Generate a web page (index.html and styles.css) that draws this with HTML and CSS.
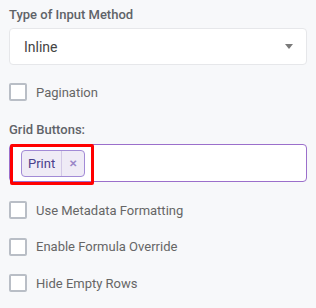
FILE: index.html
```html
<!DOCTYPE html>
<html>
<head>
    <title>Grid Settings</title>
    <link rel="stylesheet" href="styles.css">
</head>
<body>

<div class="panel">
    <div class="field">
        <label class="field-label">Type of Input Method</label>
        <div class="select">
            <span class="select-value">Inline</span>
            <span class="select-arrow"></span>
        </div>
    </div>

    <label class="check first">
        <span class="box"></span>
        <span>Pagination</span>
    </label>

    <div class="field">
        <label class="field-label">Grid Buttons:</label>
        <div class="tags">
            <span class="chip">
                <span class="chip-text">Print</span>
                <span class="chip-close">&#x2715;</span>
            </span>
            <span class="highlight"></span>
        </div>
    </div>

    <label class="check">
        <span class="box"></span>
        <span>Use Metadata Formatting</span>
    </label>
    <label class="check">
        <span class="box"></span>
        <span>Enable Formula Override</span>
    </label>
    <label class="check">
        <span class="box"></span>
        <span>Hide Empty Rows</span>
    </label>
</div>

</body>
</html>
```

FILE: styles.css
```css
body { margin: 0; background-color: #f7f8fa; font-family: Roboto, "Liberation Sans", sans-serif; }
.panel { padding: 5px 9px 0 9px; }
.field-label { display: block; font-size: 13px; font-weight: 500; color: #5f6368; line-height: 20px; }
.select { margin-top: 3px; height: 35px; background-color: #fff; border: 1px solid #e6e7ea; border-radius: 4px; display: flex; align-items: center; justify-content: space-between; padding: 0 13px 0 14px; }
.select-value { font-size: 14px; color: #444; }
.select-arrow { width: 0; height: 0; border-left: 4px solid transparent; border-right: 4px solid transparent; border-top: 5px solid #7a7a7a; }
.check { display: flex; align-items: center; gap: 9px; height: 18px; margin: 18.5px 0; font-size: 13px; color: #666; }
.check.first { margin: 18px 0 19px 0; }
.box { width: 14px; height: 14px; border: 2px solid #b9bec6; border-radius: 2px; background-color: #fff; }
.tags { position: relative; margin-top: 4px; height: 36px; background-color: #fff; border: 1.5px solid #9b6fcb; border-radius: 4px; display: flex; align-items: center; padding-left: 11px; margin-bottom: 19px; }
.chip { display: flex; align-items: center; height: 25px; border: 1px solid #a28ad6; border-radius: 4px; background-color: #efebf6; }
.chip-text { padding: 0 6px 0 6px; font-size: 13px; color: #4a3f8c; border-right: 1px solid #d2c8e6; line-height: 25px; }
.chip-close { width: 22px; text-align: center; font-size: 10px; font-weight: bold; color: #9a86c8; }
.highlight { position: absolute; left: 0; top: -1px; width: 78px; height: 35px; border: 3px solid #ff0000; border-radius: 2px; }
```
